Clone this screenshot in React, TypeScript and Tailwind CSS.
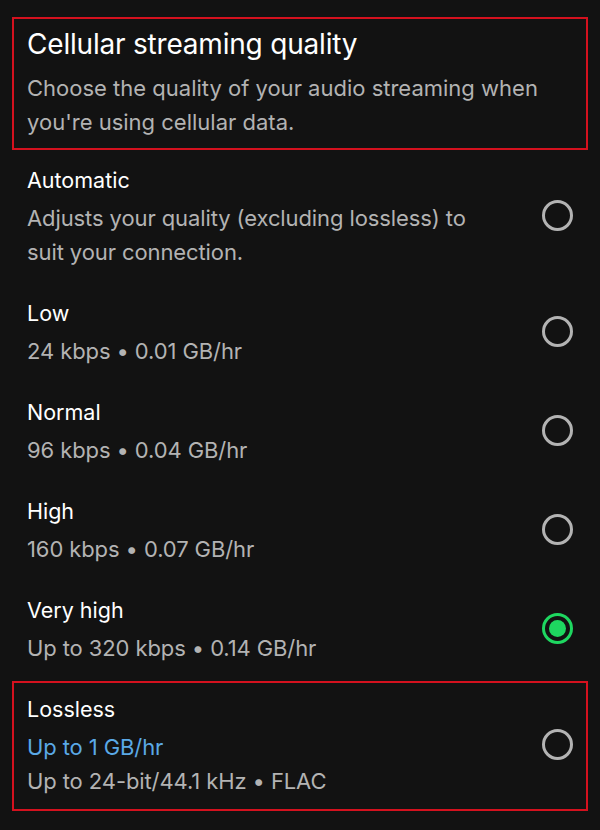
import React from "react";

type Opt = {
  title: string;
  lines: { text: string; blue?: boolean }[];
  selected?: boolean;
  boxed?: boolean;
};

const options: Opt[] = [
  {
    title: "Automatic",
    lines: [{ text: "Adjusts your quality (excluding lossless) to suit your connection." }],
  },
  { title: "Low", lines: [{ text: "24 kbps • 0.01 GB/hr" }] },
  { title: "Normal", lines: [{ text: "96 kbps • 0.04 GB/hr" }] },
  { title: "High", lines: [{ text: "160 kbps • 0.07 GB/hr" }] },
  { title: "Very high", lines: [{ text: "Up to 320 kbps • 0.14 GB/hr" }], selected: true },
  {
    title: "Lossless",
    lines: [{ text: "Up to 1 GB/hr", blue: true }, { text: "Up to 24-bit/44.1 kHz • FLAC" }],
    boxed: true,
  },
];

function Radio({ selected }: { selected?: boolean }) {
  if (selected) {
    return (
      <div className="flex h-[31px] w-[31px] shrink-0 items-center justify-center rounded-full border-[3px] border-[#1ed760]">
        <div className="h-[17px] w-[17px] rounded-full bg-[#1ed760]" />
      </div>
    );
  }
  return <div className="h-[31px] w-[31px] shrink-0 rounded-full border-[3px] border-[#b3b3b3]" />;
}

export default function App() {
  return (
    <div
      className="min-h-[830px] w-full bg-[#121212] px-[12px] pt-[17px]"
      style={{ fontFamily: "Inter, 'Noto Sans', sans-serif" }}
    >
      <div className="border-2 border-[#d4111e] px-[13px] pt-[9px] pb-[9px]">
        <div className="text-[28px] leading-[32px] tracking-[-0.2px] text-white">Cellular streaming quality</div>
        <div className="mt-[11px] text-[22px] leading-[34px] text-[#b3b3b3]">
          Choose the quality of your audio streaming when you're using cellular data.
        </div>
      </div>
      <div className="mt-[4px] flex flex-col gap-[7px]">
        {options.map((o) => (
          <div
            key={o.title}
            className={`flex items-center justify-between border-2 px-[13px] ${
              o.boxed
                ? "-mt-[2px] border-[#d4111e] pt-[8px] pb-[11px]"
                : "border-transparent pt-[6px] pb-[9px]"
            }`}
          >
            <div className="min-w-0 max-w-[460px]">
              <div className="text-[21.5px] leading-[36px] text-white">{o.title}</div>
              <div className="mt-[3px]">
                {o.lines.map((l) => (
                  <div
                    key={l.text}
                    className={`text-[22px] leading-[34px] tracking-[-0.1px] ${l.blue ? "text-[#5aa9e6]" : "text-[#b3b3b3]"}`}
                  >
                    {l.text}
                  </div>
                ))}
              </div>
            </div>
            <Radio selected={o.selected} />
          </div>
        ))}
      </div>
    </div>
  );
}
